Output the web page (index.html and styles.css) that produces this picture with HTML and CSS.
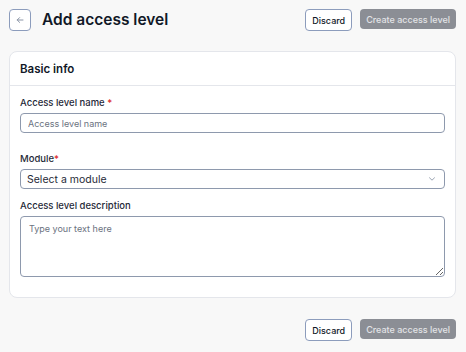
FILE: index.html
```html
<!DOCTYPE html>
<html lang="en">
<head>
    <meta charset="UTF-8">
    <title>Add access level</title>
    <link rel="stylesheet" href="styles.css">
</head>
<body>
    <div class="page">
        <!-- Header -->
        <header class="page-header">
            <div class="title-group">
                <button class="back-btn" type="button" aria-label="Back">
                    <svg width="8" height="8" viewBox="0 0 8 8" fill="none" stroke="#8a94a6" stroke-width="1" stroke-linecap="round" stroke-linejoin="round">
                        <path d="M7 4H1.2M3.6 1.6L1.2 4l2.4 2.4"/>
                    </svg>
                </button>
                <h1 class="page-title">Add access level</h1>
            </div>
            <div class="actions">
                <button class="btn btn-outline" type="button">Discard</button>
                <button class="btn btn-disabled" type="button">Create access level</button>
            </div>
        </header>

        <!-- Form card -->
        <section class="card">
            <div class="card-header">Basic info</div>
            <div class="card-body">
                <div class="field field-first">
                    <label class="field-label">Access level name <span class="req">*</span></label>
                    <input type="text" class="input" placeholder="Access level name">
                </div>
                <div class="field field-second">
                    <label class="field-label">Module<span class="req">*</span></label>
                    <div class="select">
                        <span>Select a module</span>
                        <svg width="8" height="6" viewBox="0 0 8 6" fill="none" stroke="#9aa3b2" stroke-width="1" stroke-linecap="round" stroke-linejoin="round">
                            <path d="M1.5 1.8L4 4.2l2.5-2.4"/>
                        </svg>
                    </div>
                </div>
                <div class="field">
                    <label class="field-label">Access level description</label>
                    <textarea class="textarea" placeholder="Type your text here"></textarea>
                </div>
            </div>
        </section>

        <!-- Footer -->
        <footer class="page-footer">
            <div class="actions">
                <button class="btn btn-outline" type="button">Discard</button>
                <button class="btn btn-disabled" type="button">Create access level</button>
            </div>
        </footer>
    </div>
</body>
</html>
```

FILE: styles.css
```css
:root {
    --bg: #f8f8f8;
    --white: #fff;
    --text: #111827;
    --label: #1f2937;
    --muted: #6b7280;
    --border: #e4e6eb;
    --input-border: #8e99ad;
    --btn-border: #8c9cbc;
    --disabled: #8b8e95;
    --red: #dc2626;
}

* {
    margin: 0;
    padding: 0;
    box-sizing: border-box;
    font-family: 'Inter', 'Liberation Sans', sans-serif;
}

body {
    background-color: var(--bg);
    color: var(--text);
}

.page {
    padding: 9px 10px 9px 9px;
}

/* Header */
.page-header {
    display: flex;
    justify-content: space-between;
    align-items: flex-start;
    margin-bottom: 20px;
}

.title-group {
    display: flex;
    align-items: center;
    gap: 11px;
}

.back-btn {
    width: 22px;
    height: 22px;
    border: 1px solid var(--btn-border);
    border-radius: 4px;
    background-color: var(--white);
    display: flex;
    align-items: center;
    justify-content: center;
}

.page-title {
    font-size: 15.5px;
    font-weight: 600;
    line-height: 20px;
    color: var(--text);
}

.actions {
    display: flex;
    align-items: flex-start;
    gap: 8px;
}

.btn {
    font-size: 9px;
    font-weight: 500;
    border-radius: 4px;
    padding: 0 6px;
    white-space: nowrap;
}

.btn-outline {
    height: 22px;
    background-color: var(--white);
    border: 1px solid var(--btn-border);
    color: var(--text);
}

.btn-disabled {
    height: 20px;
    background-color: var(--disabled);
    border: none;
    color: #e2e3e6;
}

/* Card */
.card {
    background-color: var(--white);
    border: 1px solid var(--border);
    border-radius: 8px;
}

.card-header {
    height: 34px;
    display: flex;
    align-items: center;
    padding: 0 10px;
    border-bottom: 1px solid var(--border);
    font-size: 11.5px;
    font-weight: 600;
    color: var(--text);
}

.card-body {
    padding: 10px 10px 20px;
}

.field {
    display: flex;
    flex-direction: column;
}

.field-first {
    margin-bottom: 19px;
}

.field-second {
    margin-bottom: 10px;
}

.field-label {
    font-size: 9.5px;
    font-weight: 500;
    line-height: 14px;
    color: var(--label);
    margin-bottom: 3px;
}

.req {
    color: var(--red);
}

.input,
.select,
.textarea {
    width: 100%;
    border: 1px solid var(--input-border);
    border-radius: 4px;
    background-color: var(--white);
    color: var(--label);
    outline: none;
}

.input {
    height: 20px;
    padding: 0 7px;
    font-size: 9px;
}

.input::placeholder,
.textarea::placeholder {
    color: var(--muted);
}

.select {
    height: 20px;
    padding: 0 8px 0 6px;
    font-size: 10.5px;
    display: flex;
    align-items: center;
    justify-content: space-between;
}

.textarea {
    height: 61px;
    padding: 6px 8px;
    font-size: 9px;
    resize: vertical;
}

/* Footer */
.page-footer {
    display: flex;
    justify-content: flex-end;
    margin-top: 21px;
}
```
